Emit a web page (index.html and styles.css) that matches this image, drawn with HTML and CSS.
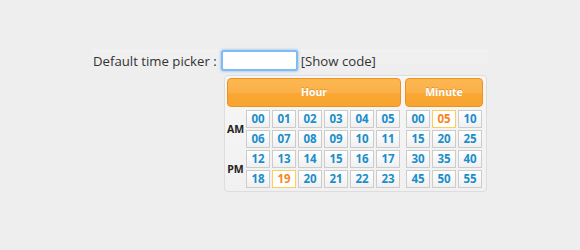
FILE: index.html
```html
<!DOCTYPE html>
<html>
<head>
<meta charset="utf-8">
<link rel="stylesheet" href="styles.css">
</head>
<body>
<div class="page">
  <div class="form-row">
    <label class="label">Default time picker :</label>
    <input class="time-input" type="text">
    <span class="show-code">[Show code]</span>
  </div>
  <div class="picker">
    <div class="section hour">
      <div class="head">Hour</div>
      <div class="hour-grid">
        <div class="period am">AM</div>
        <div class="cell">00</div><div class="cell">01</div><div class="cell">02</div><div class="cell">03</div><div class="cell">04</div><div class="cell">05</div>
        <div class="cell">06</div><div class="cell">07</div><div class="cell">08</div><div class="cell">09</div><div class="cell">10</div><div class="cell">11</div>
        <div class="period pm">PM</div>
        <div class="cell">12</div><div class="cell">13</div><div class="cell">14</div><div class="cell">15</div><div class="cell">16</div><div class="cell">17</div>
        <div class="cell">18</div><div class="cell selected">19</div><div class="cell">20</div><div class="cell">21</div><div class="cell">22</div><div class="cell">23</div>
      </div>
    </div>
    <div class="section minute">
      <div class="head">Minute</div>
      <div class="minute-grid">
        <div class="cell">00</div><div class="cell selected">05</div><div class="cell">10</div>
        <div class="cell">15</div><div class="cell">20</div><div class="cell">25</div>
        <div class="cell">30</div><div class="cell">35</div><div class="cell">40</div>
        <div class="cell">45</div><div class="cell">50</div><div class="cell">55</div>
      </div>
    </div>
  </div>
</div>
</body>
</html>
```

FILE: styles.css
```css
html, body {
  margin: 0;
  padding: 0;
  background: #eeeeee;
  font-family: "Open Sans", "DejaVu Sans", sans-serif;
  color: #333333;
}

.page {
  padding: 49px 0 0 92px;
}

.form-row {
  display: flex;
  align-items: center;
  width: 396px;
  height: 23px;
  background: linear-gradient(#f1f1f1, #eeeeee);
  font-size: 13.2px;
}

.label {
  padding-left: 1px;
}

.time-input {
  box-sizing: border-box;
  width: 77px;
  height: 21px;
  margin: 0 0 0 4px;
  padding: 0;
  border: 2px solid #7fbcf3;
  border-radius: 3px;
  background: #ffffff;
  box-shadow: 0 0 2px 1px rgba(130, 185, 240, 0.55);
  outline: none;
}

.show-code {
  margin-left: 3px;
}

.picker {
  box-sizing: border-box;
  display: flex;
  gap: 4px;
  width: 263px;
  margin: 3px 0 0 132px;
  padding: 2px 3px 3px 2px;
  border: 1px solid #dddddd;
  border-radius: 4px;
  background: linear-gradient(#f6f6f6, #f1f1f1);
}

.hour { width: 174px; }
.minute { width: 78px; }

.head {
  box-sizing: border-box;
  height: 29px;
  margin-bottom: 3px;
  border: 1px solid #ec9220;
  border-radius: 4px;
  background: linear-gradient(#fcb752 0%, #fbb049 50%, #f9a633 55%, #f8a431 100%);
  color: #ffffff;
  font-weight: bold;
  font-size: 10.5px;
  line-height: 27px;
  text-align: center;
  text-shadow: 0 -1px 0 rgba(160, 80, 0, 0.35);
}

.hour-grid {
  display: grid;
  grid-template-columns: 17px repeat(6, 24px);
  grid-auto-rows: 18px;
  gap: 2px;
}

.period {
  grid-column: 1;
  display: flex;
  align-items: center;
  justify-content: center;
  font-size: 10.5px;
  font-weight: bold;
  color: #222222;
}
.am { grid-row: 1 / 3; }
.pm { grid-row: 3 / 5; }

.minute-grid {
  display: grid;
  grid-template-columns: repeat(3, 24px);
  grid-auto-rows: 18px;
  gap: 2px;
  padding-left: 1px;
}

.cell {
  box-sizing: border-box;
  border: 1px solid #cccccc;
  background: linear-gradient(#ffffff, #f0f0f0);
  color: #1b8ecb;
  font-size: 11.5px;
  font-weight: bold;
  line-height: 16px;
  text-align: center;
}

.cell.selected {
  border-color: #fcd056;
  background: #ffffff;
  color: #f5861f;
}
```
